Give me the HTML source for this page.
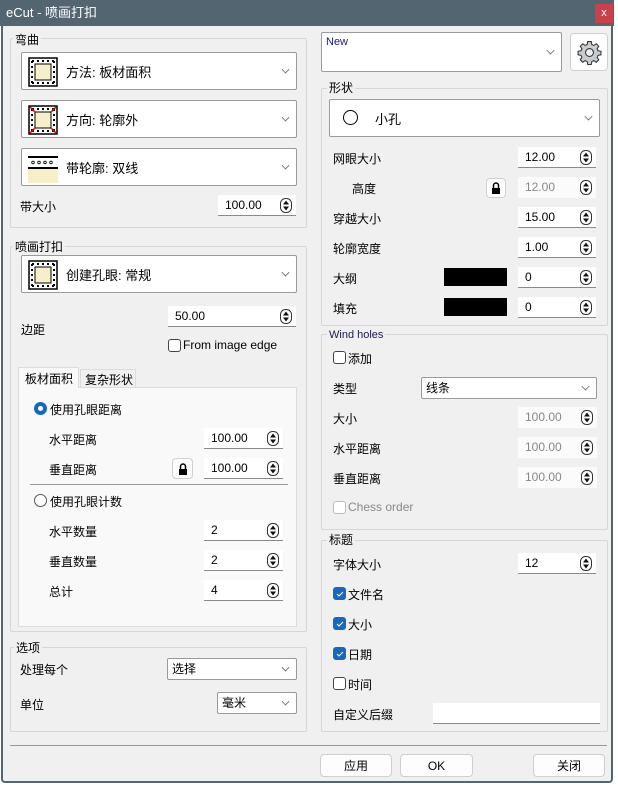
<!DOCTYPE html>
<html><head><meta charset="utf-8"><style>
*{box-sizing:border-box}
body{margin:0;width:618px;height:785px;background:#fff;font-family:"Liberation Sans","Noto Sans CJK SC",sans-serif;font-size:12px;color:#000;position:relative;overflow:hidden}
.a{position:absolute}
.win{left:1px;top:0;width:612px;height:783px;background:#f0f0f0;border:2px solid #526570;border-top:none;border-radius:0 0 4px 4px}
.title{left:0;top:0;width:614px;height:26px;background:#526570;color:#fff;font-size:13px;line-height:26px;padding-left:6px}
.close{left:595px;top:4px;width:18px;height:19px;background:#c9414a;color:#fff;font-size:11px;text-align:center;line-height:18px}
.grp{border:1px solid #d6d6d6;border-radius:2px}
.gl{background:#f0f0f0;padding:0 2px;line-height:14px}
.combo{background:#fff;border:1px solid #9a9a9a;border-radius:2px}
.chev{position:absolute;right:7px;top:50%;width:7px;height:7px;border-right:1px solid #666;border-bottom:1px solid #666;transform:rotate(45deg) scale(.8);margin-top:-5px}
.spin{background:#fff;border-bottom:1px solid #8a8a8a;height:21px;line-height:20px;padding-left:7px;color:#000}
.spin.dis{color:#888;border-bottom:none;background:#fbfbfb}
.spin svg{position:absolute;right:4px;top:3px}
.btn{background:#fdfdfd;border:1px solid #cfcfcf;border-radius:4px;text-align:center;line-height:22px}
.lock{background:#fdfdfd;border:1px solid #cfcfcf;border-radius:4px}
.cb{width:13px;height:13px;border:1px solid #444;border-radius:3px;background:#fff}
.cb.on{background:#1866c0;border-color:#1866c0}
</style></head><body>
<div class="a win"></div>
<div class="a title">eCut - 喷画打扣</div>
<div class="a close">x</div>

<div class="a grp" style="left:10px;top:38px;width:297px;height:190px"></div>
<div class="a gl" style="left:13px;top:33px">弯曲</div>
<div class="a combo" style="left:21px;top:52px;width:276px;height:38px">
 <svg class="a" style="left:6px;top:4px" width="30" height="30"><rect x="1" y="1" width="28" height="28" fill="#fff" stroke="#000" stroke-width="1.5"/><rect x="7" y="7" width="16" height="16" fill="#f6efc9" stroke="#000"/><path d="M4 4h22M4 26h22M4 4v22M26 4v22" stroke="#000" stroke-width="2" stroke-dasharray="2 3"/></svg>
 <span class="a" style="left:44px;top:9px;font-size:13px">方法: 板材面积</span><div class="chev"></div></div>
<div class="a combo" style="left:21px;top:100px;width:276px;height:38px">
 <svg class="a" style="left:6px;top:4px" width="30" height="30"><rect x="1" y="1" width="28" height="28" fill="#fff" stroke="#000" stroke-width="1.5"/><rect x="7" y="7" width="16" height="16" fill="#f6efc9" stroke="#000"/><path d="M4 4h22M4 26h22M4 4v22M26 4v22" stroke="#000" stroke-width="2" stroke-dasharray="2 3"/><path d="M2 2l5 5M28 2l-5 5M2 28l5-5M28 28l-5-5" stroke="#e00" stroke-width="1.5"/></svg>
 <span class="a" style="left:44px;top:9px;font-size:13px">方向: 轮廓外</span><div class="chev"></div></div>
<div class="a combo" style="left:21px;top:148px;width:276px;height:38px">
 <svg class="a" style="left:6px;top:6px" width="30" height="28"><rect x="0" y="14" width="30" height="14" fill="#f6efc9"/><path d="M0 2h30M0 13h30" stroke="#000" stroke-width="2"/><circle cx="5" cy="7.5" r="1.3" fill="none" stroke="#000" stroke-width=".8"/><circle cx="11" cy="7.5" r="1.3" fill="none" stroke="#000" stroke-width=".8"/><circle cx="17" cy="7.5" r="1.3" fill="none" stroke="#000" stroke-width=".8"/><circle cx="23" cy="7.5" r="1.3" fill="none" stroke="#000" stroke-width=".8"/></svg>
 <span class="a" style="left:44px;top:9px;font-size:13px">带轮廓: 双线</span><div class="chev"></div></div>
<div class="a" style="left:20px;top:198px">带大小</div>
<div class="a spin" style="left:218px;top:195px;width:78px">100.00<svg width="12" height="15"><rect x=".5" y=".5" width="11" height="14" rx="5" fill="#fff" stroke="#333"/><path d="M3 6.5L6 2.5L9 6.5ZM3 8.5L6 12.5L9 8.5Z" fill="#111"/></svg></div>

<div class="a grp" style="left:10px;top:246px;width:297px;height:386px"></div>
<div class="a gl" style="left:13px;top:240px">喷画打扣</div>
<div class="a combo" style="left:21px;top:255px;width:276px;height:38px">
 <svg class="a" style="left:6px;top:4px" width="30" height="30"><rect x="1" y="1" width="28" height="28" fill="#fff" stroke="#000" stroke-width="1.5"/><rect x="7" y="7" width="16" height="16" fill="#f6efc9" stroke="#000"/><path d="M4 4h22M4 26h22M4 4v22M26 4v22" stroke="#000" stroke-width="2" stroke-dasharray="2 3"/></svg>
 <span class="a" style="left:44px;top:9px;font-size:13px">创建孔眼: 常规</span><div class="chev"></div></div>
<div class="a" style="left:21px;top:321px">边距</div>
<div class="a spin" style="left:168px;top:306px;width:128px">50.00<svg width="12" height="15"><rect x=".5" y=".5" width="11" height="14" rx="5" fill="#fff" stroke="#333"/><path d="M3 6.5L6 2.5L9 6.5ZM3 8.5L6 12.5L9 8.5Z" fill="#111"/></svg></div>
<div class="a cb" style="left:168px;top:339px"></div>
<div class="a" style="left:183px;top:338px">From image edge</div>
<div class="a" style="left:18px;top:387px;width:279px;height:240px;background:#f9f9f9;border:1px solid #dcdcdc"></div>
<div class="a" style="left:18px;top:367px;width:61px;height:21px;background:#f9f9f9;border:1px solid #dcdcdc;border-bottom:none;padding:2px 0 0 6px">板材面积</div>
<div class="a" style="left:80px;top:369px;width:56px;height:18px;border:1px solid #dcdcdc;border-bottom:none;padding:1px 0 0 4px">复杂形状</div>
<div class="a" style="left:34px;top:402px;width:13px;height:13px;border-radius:50%;background:#1866c0"></div>
<div class="a" style="left:38px;top:406px;width:5px;height:5px;border-radius:50%;background:#fff"></div>
<div class="a" style="left:50px;top:401px">使用孔眼距离</div>
<div class="a" style="left:49px;top:431px">水平距离</div>
<div class="a spin" style="left:204px;top:428px;width:79px">100.00<svg width="12" height="15"><rect x=".5" y=".5" width="11" height="14" rx="5" fill="#fff" stroke="#333"/><path d="M3 6.5L6 2.5L9 6.5ZM3 8.5L6 12.5L9 8.5Z" fill="#111"/></svg></div>
<div class="a" style="left:49px;top:461px">垂直距离</div>
<div class="a lock" style="left:172px;top:458px;width:21px;height:21px"><svg class="a" style="left:5px;top:4px" width="10" height="12"><path d="M2.5 6V3.5a2.5 2.5 0 0 1 5 0V6" fill="none" stroke="#000" stroke-width="1.5"/><rect x="1" y="6" width="8" height="6" fill="#000"/></svg></div>
<div class="a spin" style="left:204px;top:458px;width:79px">100.00<svg width="12" height="15"><rect x=".5" y=".5" width="11" height="14" rx="5" fill="#fff" stroke="#333"/><path d="M3 6.5L6 2.5L9 6.5ZM3 8.5L6 12.5L9 8.5Z" fill="#111"/></svg></div>
<div class="a" style="left:30px;top:484px;width:258px;height:1px;background:#999"></div>
<div class="a" style="left:34px;top:494px;width:13px;height:13px;border-radius:50%;border:1px solid #555;background:#fff"></div>
<div class="a" style="left:50px;top:493px">使用孔眼计数</div>
<div class="a" style="left:49px;top:523px">水平数量</div>
<div class="a spin" style="left:204px;top:520px;width:79px">2<svg width="12" height="15"><rect x=".5" y=".5" width="11" height="14" rx="5" fill="#fff" stroke="#333"/><path d="M3 6.5L6 2.5L9 6.5ZM3 8.5L6 12.5L9 8.5Z" fill="#111"/></svg></div>
<div class="a" style="left:49px;top:553px">垂直数量</div>
<div class="a spin" style="left:204px;top:550px;width:79px">2<svg width="12" height="15"><rect x=".5" y=".5" width="11" height="14" rx="5" fill="#fff" stroke="#333"/><path d="M3 6.5L6 2.5L9 6.5ZM3 8.5L6 12.5L9 8.5Z" fill="#111"/></svg></div>
<div class="a" style="left:49px;top:583px">总计</div>
<div class="a spin" style="left:204px;top:580px;width:79px">4<svg width="12" height="15"><rect x=".5" y=".5" width="11" height="14" rx="5" fill="#fff" stroke="#333"/><path d="M3 6.5L6 2.5L9 6.5ZM3 8.5L6 12.5L9 8.5Z" fill="#111"/></svg></div>

<div class="a grp" style="left:10px;top:647px;width:297px;height:85px"></div>
<div class="a gl" style="left:14px;top:641px">选项</div>
<div class="a" style="left:20px;top:661px">处理每个</div>
<div class="a combo" style="left:167px;top:658px;width:130px;height:22px;padding:1px 0 0 4px">选择<div class="chev"></div></div>
<div class="a" style="left:20px;top:696px">单位</div>
<div class="a combo" style="left:217px;top:692px;width:80px;height:22px;padding:1px 0 0 4px">毫米<div class="chev"></div></div>

<div class="a combo" style="left:321px;top:32px;width:241px;height:40px;padding:3px 0 0 4px;font-size:11px;color:#1a1a80">New<div class="chev"></div></div>
<div class="a btn" style="left:570px;top:33px;width:38px;height:38px"><svg class="a" style="left:6px;top:6px" width="25" height="25" viewBox="0 0 24 24"><path fill="#c8ccd0" stroke="#333" stroke-width="1" d="M10.3 1.5h3.4l.5 2.8 2 .9 2.3-1.6 2.4 2.4-1.6 2.3.9 2 2.8.5v3.4l-2.8.5-.9 2 1.6 2.3-2.4 2.4-2.3-1.6-2 .9-.5 2.8h-3.4l-.5-2.8-2-.9-2.3 1.6-2.4-2.4 1.6-2.3-.9-2-2.8-.5v-3.4l2.8-.5.9-2-1.6-2.3 2.4-2.4 2.3 1.6 2-.9z"/><circle cx="12" cy="12" r="3.8" fill="#f0f0f0" stroke="#333"/></svg></div>

<div class="a grp" style="left:321px;top:88px;width:287px;height:238px"></div>
<div class="a gl" style="left:327px;top:81px">形状</div>
<div class="a combo" style="left:329px;top:99px;width:271px;height:38px">
 <div class="a" style="left:13px;top:10px;width:15px;height:15px;border:1.5px solid #000;border-radius:50%"></div>
 <span class="a" style="left:45px;top:9px;font-size:13px">小孔</span><div class="chev"></div></div>
<div class="a" style="left:333px;top:150px">网眼大小</div>
<div class="a spin" style="left:518px;top:147px;width:78px">12.00<svg width="12" height="15"><rect x=".5" y=".5" width="11" height="14" rx="5" fill="#fff" stroke="#333"/><path d="M3 6.5L6 2.5L9 6.5ZM3 8.5L6 12.5L9 8.5Z" fill="#111"/></svg></div>
<div class="a" style="left:352px;top:180px">高度</div>
<div class="a lock" style="left:486px;top:178px;width:20px;height:20px"><svg class="a" style="left:4px;top:3px" width="10" height="12"><path d="M2.5 6V3.5a2.5 2.5 0 0 1 5 0V6" fill="none" stroke="#000" stroke-width="1.5"/><rect x="1" y="6" width="8" height="6" fill="#000"/></svg></div>
<div class="a spin dis" style="left:518px;top:177px;width:78px">12.00<svg width="12" height="15"><rect x=".5" y=".5" width="11" height="14" rx="5" fill="#fff" stroke="#333"/><path d="M3 6.5L6 2.5L9 6.5ZM3 8.5L6 12.5L9 8.5Z" fill="#111"/></svg></div>
<div class="a" style="left:333px;top:210px">穿越大小</div>
<div class="a spin" style="left:518px;top:207px;width:78px">15.00<svg width="12" height="15"><rect x=".5" y=".5" width="11" height="14" rx="5" fill="#fff" stroke="#333"/><path d="M3 6.5L6 2.5L9 6.5ZM3 8.5L6 12.5L9 8.5Z" fill="#111"/></svg></div>
<div class="a" style="left:333px;top:240px">轮廓宽度</div>
<div class="a spin" style="left:518px;top:237px;width:78px">1.00<svg width="12" height="15"><rect x=".5" y=".5" width="11" height="14" rx="5" fill="#fff" stroke="#333"/><path d="M3 6.5L6 2.5L9 6.5ZM3 8.5L6 12.5L9 8.5Z" fill="#111"/></svg></div>
<div class="a" style="left:333px;top:270px">大纲</div>
<div class="a" style="left:444px;top:268px;width:63px;height:18px;background:#000"></div>
<div class="a spin" style="left:518px;top:267px;width:78px">0<svg width="12" height="15"><rect x=".5" y=".5" width="11" height="14" rx="5" fill="#fff" stroke="#333"/><path d="M3 6.5L6 2.5L9 6.5ZM3 8.5L6 12.5L9 8.5Z" fill="#111"/></svg></div>
<div class="a" style="left:333px;top:300px">填充</div>
<div class="a" style="left:444px;top:298px;width:63px;height:18px;background:#000"></div>
<div class="a spin" style="left:518px;top:297px;width:78px">0<svg width="12" height="15"><rect x=".5" y=".5" width="11" height="14" rx="5" fill="#fff" stroke="#333"/><path d="M3 6.5L6 2.5L9 6.5ZM3 8.5L6 12.5L9 8.5Z" fill="#111"/></svg></div>

<div class="a grp" style="left:321px;top:334px;width:287px;height:196px"></div>
<div class="a gl" style="left:327px;top:328px;font-size:11px;color:#1a1a50">Wind holes</div>
<div class="a cb" style="left:333px;top:351px"></div>
<div class="a" style="left:348px;top:350px">添加</div>
<div class="a" style="left:333px;top:380px">类型</div>
<div class="a combo" style="left:421px;top:377px;width:176px;height:22px;padding:1px 0 0 4px">线条<div class="chev"></div></div>
<div class="a" style="left:333px;top:410px">大小</div>
<div class="a spin dis" style="left:518px;top:407px;width:79px">100.00<svg width="12" height="15"><rect x=".5" y=".5" width="11" height="14" rx="5" fill="#fff" stroke="#333"/><path d="M3 6.5L6 2.5L9 6.5ZM3 8.5L6 12.5L9 8.5Z" fill="#111"/></svg></div>
<div class="a" style="left:333px;top:440px">水平距离</div>
<div class="a spin dis" style="left:518px;top:437px;width:79px">100.00<svg width="12" height="15"><rect x=".5" y=".5" width="11" height="14" rx="5" fill="#fff" stroke="#333"/><path d="M3 6.5L6 2.5L9 6.5ZM3 8.5L6 12.5L9 8.5Z" fill="#111"/></svg></div>
<div class="a" style="left:333px;top:470px">垂直距离</div>
<div class="a spin dis" style="left:518px;top:467px;width:79px">100.00<svg width="12" height="15"><rect x=".5" y=".5" width="11" height="14" rx="5" fill="#fff" stroke="#333"/><path d="M3 6.5L6 2.5L9 6.5ZM3 8.5L6 12.5L9 8.5Z" fill="#111"/></svg></div>
<div class="a cb" style="left:333px;top:501px;border-color:#bbb"></div>
<div class="a" style="left:348px;top:500px;font-size:12px;color:#888">Chess order</div>

<div class="a grp" style="left:321px;top:540px;width:287px;height:192px"></div>
<div class="a gl" style="left:327px;top:533px">标题</div>
<div class="a" style="left:333px;top:556px">字体大小</div>
<div class="a spin" style="left:518px;top:553px;width:78px">12<svg width="12" height="15"><rect x=".5" y=".5" width="11" height="14" rx="5" fill="#fff" stroke="#333"/><path d="M3 6.5L6 2.5L9 6.5ZM3 8.5L6 12.5L9 8.5Z" fill="#111"/></svg></div>
<div class="a cb on" style="left:333px;top:587px"><svg class="a" style="left:2px;top:2px" width="8" height="8"><path d="M1 4l2 2 4-4" stroke="#fff" fill="none"/></svg></div>
<div class="a" style="left:348px;top:586px">文件名</div>
<div class="a cb on" style="left:333px;top:617px"><svg class="a" style="left:2px;top:2px" width="8" height="8"><path d="M1 4l2 2 4-4" stroke="#fff" fill="none"/></svg></div>
<div class="a" style="left:348px;top:616px">大小</div>
<div class="a cb on" style="left:333px;top:647px"><svg class="a" style="left:2px;top:2px" width="8" height="8"><path d="M1 4l2 2 4-4" stroke="#fff" fill="none"/></svg></div>
<div class="a" style="left:348px;top:646px">日期</div>
<div class="a cb" style="left:333px;top:677px"></div>
<div class="a" style="left:348px;top:676px">时间</div>
<div class="a" style="left:333px;top:706px">自定义后缀</div>
<div class="a spin" style="left:433px;top:703px;width:167px"></div>

<div class="a" style="left:10px;top:745px;width:597px;height:1px;background:#999"></div>
<div class="a btn" style="left:320px;top:754px;width:72px;height:23px">应用</div>
<div class="a btn" style="left:400px;top:754px;width:73px;height:23px">OK</div>
<div class="a btn" style="left:533px;top:754px;width:72px;height:23px">关闭</div>
</body></html>
